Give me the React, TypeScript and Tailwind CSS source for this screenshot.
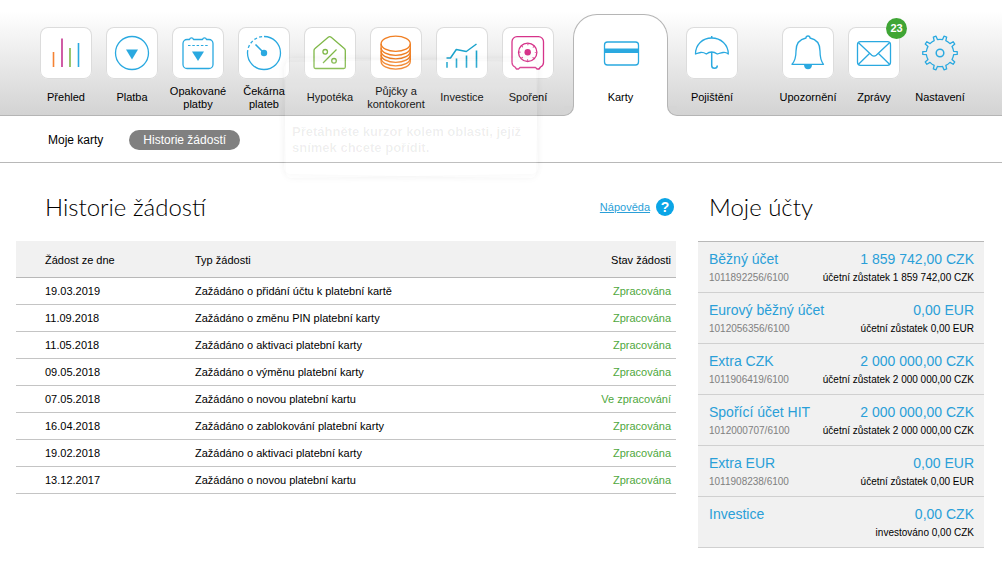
import React from "react";

const BLUE = "#2aa9e0";

type IconProps = { children: React.ReactNode; color?: string };

function Icon({ children, color = BLUE }: IconProps) {
  return (
    <svg viewBox="0 0 52 52" className="block size-[52px]" fill="none" stroke={color} strokeWidth="1.3" strokeLinejoin="round" aria-hidden="true">
      {children}
    </svg>
  );
}

function gearPath(teeth: number, outer: number, inner: number): string {
  const step = (Math.PI * 2) / teeth;
  const parts: string[] = [];
  for (let i = 0; i < teeth; i++) {
    const mid = -Math.PI / 2 + step / 2 + i * step;
    const at = (r: number, a: number) => `${(26 + r * Math.cos(a)).toFixed(2)} ${(26 + r * Math.sin(a)).toFixed(2)}`;
    parts.push(`${i === 0 ? "M" : "L"}${at(inner, mid - step * 0.2)}`);
    parts.push(`L${at(outer, mid - step * 0.13)}`);
    parts.push(`L${at(outer, mid + step * 0.13)}`);
    parts.push(`L${at(inner, mid + step * 0.2)}`);
    parts.push(`A${inner} ${inner} 0 0 1 ${at(inner, mid + step * 0.8)}`);
  }
  return parts.join("") + "Z";
}

const icons = {
  overview: (
    <Icon>
      <path d="M13.5 25V40" stroke="#f58233" strokeWidth="1.6" />
      <path d="M22 11.5V40" stroke="#c4348f" strokeWidth="1.6" />
      <path d="M30 21V40" stroke="#7fb848" strokeWidth="1.6" />
      <path d="M38.5 16V40" strokeWidth="1.6" />
    </Icon>
  ),
  payment: (
    <Icon>
      <circle cx="26" cy="26" r="16.5" />
      <path d="M20 22.5H32L26 32.5Z" fill={BLUE} stroke="none" />
    </Icon>
  ),
  repeated: (
    <Icon>
      <path d="M17.5 12.5H15A4 4 0 0 0 11 16.5V37.5A4 4 0 0 0 15 41.5H37A4 4 0 0 0 41 37.5V16.5A4 4 0 0 0 37 12.5H34.5Q34 10.8 32.5 10.8T30.5 12.5H21.5Q21 10.8 19.5 10.8T17.5 12.5Z" />
      <path d="M16 18.5H37" strokeDasharray="2.5 1.8" strokeWidth="1" />
      <path d="M20 24.5H32L26 34Z" fill={BLUE} stroke="none" />
    </Icon>
  ),
  waiting: (
    <Icon>
      <path d="M26 9.5A16.5 16.5 0 1 1 9.5 26" />
      <path d="M9.5 26A16.5 16.5 0 0 1 26 9.5" strokeDasharray="3 2.2" />
      <path d="M17.5 17.5L26 26" strokeWidth="1.6" />
      <circle cx="26" cy="26" r="3.2" fill={BLUE} stroke="none" />
    </Icon>
  ),
  mortgage: (
    <Icon color="#7fb848">
      <path d="M24.2 10.3Q25.7 9 27.2 10.3L40.3 21.5Q41.3 22.3 41.3 23.5V40Q41.3 41.5 39.8 41.5H11.5Q10 41.5 10 40V23.5Q10 22.3 11 21.5Z" />
      <path d="M19 36L32.5 22.5" />
      <circle cx="21.2" cy="24.8" r="2.3" />
      <circle cx="30" cy="33.8" r="2.3" />
    </Icon>
  ),
  loans: (
    <Icon color="#f07f23">
      <ellipse cx="25.7" cy="16.8" rx="14.6" ry="7.6" />
      <path d="M11.1 16.8V34.5C11.1 38.7 17.6 42.1 25.7 42.1S40.3 38.7 40.3 34.5V16.8" />
      <path d="M11.1 20.8C11.1 25 17.6 28.4 25.7 28.4S40.3 25 40.3 20.8M11.1 24.3C11.1 28.5 17.6 31.9 25.7 31.9S40.3 28.5 40.3 24.3M11.1 27.8C11.1 32 17.6 35.4 25.7 35.4S40.3 32 40.3 27.8M11.1 31.2C11.1 35.4 17.6 38.8 25.7 38.8S40.3 35.4 40.3 31.2" />
    </Icon>
  ),
  invest: (
    <Icon color="#1ba3cc">
      <path d="M10.5 31H14.5L20.3 22.5L30.3 24.5L40.5 17" strokeWidth="1.5" />
      <path d="M11 35V40.7M20.5 31.5V40.7M30.5 28.5V40.7M40.5 23.5V40.7" strokeWidth="1.6" />
    </Icon>
  ),
  savings: (
    <Icon color="#d6338a">
      <path d="M15 9.7H36.5A5 5 0 0 1 41.5 14.7V35.5A5 5 0 0 1 38.5 40L37 42H35L33.5 40.5H18L16.5 42H14.5L13 40A5 5 0 0 1 10 35.5V14.7A5 5 0 0 1 15 9.7Z" />
      <circle cx="25.7" cy="25.3" r="9.2" />
      <circle cx="25.7" cy="25.3" r="3.2" fill="#d6338a" stroke="none" />
      <circle cx="25.7" cy="25.3" r="7.8" strokeWidth="1.5" strokeDasharray="1 5.126" strokeDashoffset="0.5" />
    </Icon>
  ),
  cards: (
    <Icon>
      <rect x="9.5" y="15" width="34" height="23" rx="3" />
      <path d="M9.5 23.7H43.5" strokeWidth="4.6" />
    </Icon>
  ),
  insurance: (
    <Icon>
      <path d="M9.5 27C9.5 17.5 16.5 11 25.7 11S42.3 17.5 42.3 27Q39.8 25 37 25.5T31.3 27Q28.5 25 25.7 25T20.3 27Q17.2 25 14.6 25.5T9.5 27Z" />
      <path d="M25.7 9V11M25.7 25V38.5Q25.7 41.3 28.5 41.3T31.3 38.5" strokeWidth="1.5" />
    </Icon>
  ),
  alerts: (
    <Icon>
      <path d="M24 11Q24 9 26 9T28 11Q38 13 38 24Q38 33 41.5 37.3H10Q14 33 14 24Q14 13 24 11Z" />
      <path d="M22 38H30Q29.5 42.3 26 42.3T22 38Z" fill={BLUE} stroke="none" />
    </Icon>
  ),
  messages: (
    <Icon>
      <rect x="9.5" y="14.7" width="33" height="23.6" rx="3" />
      <path d="M10.5 15.8L23.8 28.3Q26 30 28.2 28.3L41.5 15.8M10.5 37.3L21.5 26.5M41.5 37.3L30.5 26.5" />
    </Icon>
  ),
  settings: (
    <Icon>
      <path d={gearPath(10, 17.3, 13.7)} />
      <circle cx="26" cy="26" r="3.8" strokeWidth="1.5" />
    </Icon>
  ),
};

type NavItemProps = { icon: React.ReactNode; label: string; plain?: boolean; badge?: number };

function NavItem({ icon, label, plain = false, badge }: NavItemProps) {
  return (
    <a href="#" className="flex w-[66px] shrink-0 flex-col items-center pt-[27px]">
      <span className={plain ? "size-[52px]" : "relative size-[52px] rounded-lg bg-white ring-1 ring-[#dcdcdc] ring-inset"}>
        {icon}
        {badge !== undefined && (
          <span className="absolute -top-[9px] -right-[7px] flex size-[21px] items-center justify-center rounded-full bg-[#3fa535] text-[11px] font-bold text-white">
            {badge}
          </span>
        )}
      </span>
      <span className="mt-1 flex h-[29px] items-center text-center leading-[13px]">{label}</span>
    </a>
  );
}

const requests = [
  ["19.03.2019", "Zažádáno o přidání účtu k platební kartě", "Zpracována"],
  ["11.09.2018", "Zažádáno o změnu PIN platební karty", "Zpracována"],
  ["11.05.2018", "Zažádáno o aktivaci platební karty", "Zpracována"],
  ["09.05.2018", "Zažádáno o výměnu platební karty", "Zpracována"],
  ["07.05.2018", "Zažádáno o novou platební kartu", "Ve zpracování"],
  ["16.04.2018", "Zažádáno o zablokování platební karty", "Zpracována"],
  ["19.02.2018", "Zažádáno o aktivaci platební karty", "Zpracována"],
  ["13.12.2017", "Zažádáno o novou platební kartu", "Zpracována"],
];

const accounts = [
  { name: "Běžný účet", number: "1011892256/6100", amount: "1 859 742,00 CZK", note: "účetní zůstatek 1 859 742,00 CZK" },
  { name: "Eurový běžný účet", number: "1012056356/6100", amount: "0,00 EUR", note: "účetní zůstatek 0,00 EUR" },
  { name: "Extra CZK", number: "1011906419/6100", amount: "2 000 000,00 CZK", note: "účetní zůstatek 2 000 000,00 CZK" },
  { name: "Spořící účet HIT", number: "1012000707/6100", amount: "2 000 000,00 CZK", note: "účetní zůstatek 2 000 000,00 CZK" },
  { name: "Extra EUR", number: "1011908238/6100", amount: "0,00 EUR", note: "účetní zůstatek 0,00 EUR" },
  { name: "Investice", number: "", amount: "0,00 CZK", note: "investováno 0,00 CZK" },
];

function MainNav() {
  return (
    <nav aria-label="Hlavní" className="flex h-[116px] border-b border-[#b5b5b5] bg-linear-to-b from-white from-10% to-[#d3d3d3] pr-[29px] pl-[33px]">
      <NavItem icon={icons.overview} label="Přehled" />
      <NavItem icon={icons.payment} label="Platba" />
      <NavItem icon={icons.repeated} label="Opakované platby" />
      <NavItem icon={icons.waiting} label="Čekárna plateb" />
      <NavItem icon={icons.mortgage} label="Hypotéka" />
      <NavItem icon={icons.loans} label="Půjčky a kontokorent" />
      <NavItem icon={icons.invest} label="Investice" />
      <NavItem icon={icons.savings} label="Spoření" />
      <a
        href="#"
        aria-current="page"
        className="relative mt-[14px] mr-[11px] -mb-px ml-3 flex w-[95px] shrink-0 flex-col items-center rounded-t-[24px] border border-b-0 border-[#b5b5b5] bg-white pt-3"
      >
        <span className="absolute bottom-0 -left-[10px] size-[10px] bg-white">
          <span className="block size-full rounded-br-[10px] border-r border-b border-[#b5b5b5] bg-[#d5d5d5]" />
        </span>
        <span className="absolute -right-[10px] bottom-0 size-[10px] bg-white">
          <span className="block size-full rounded-bl-[10px] border-b border-l border-[#b5b5b5] bg-[#d5d5d5]" />
        </span>
        {icons.cards}
        <span className="mt-1 flex h-[29px] items-center leading-[13px]">Karty</span>
      </a>
      <NavItem icon={icons.insurance} label="Pojištění" />
      <div className="ml-auto flex">
        <NavItem icon={icons.alerts} label="Upozornění" />
        <NavItem icon={icons.messages} label="Zprávy" badge={23} />
        <NavItem icon={icons.settings} label="Nastavení" plain />
      </div>
    </nav>
  );
}

function RequestHistory() {
  return (
    <section className="min-w-0 flex-1">
      <div className="flex h-[78px] items-center justify-between pt-[10px] pr-[2px] pl-[29px]">
        <h1 className="font-['Lato'] text-2xl font-light">Historie žádostí</h1>
        <a href="#" className="flex items-center gap-[6px] text-[#2a9fd8]">
          <span className="underline">Nápověda</span>
          <span className="flex size-[18px] items-center justify-center rounded-full bg-[#0ba5e6] text-sm font-bold text-white">?</span>
        </a>
      </div>
      <table className="w-full border-separate border-spacing-0 text-left">
        <thead>
          <tr className="bg-[#f1f1f1]">
            <th className="h-[37px] w-[179px] border-b border-[#b8b8b8] pt-[2px] pl-[29px] font-normal">Žádost ze dne</th>
            <th className="border-b border-[#b8b8b8] pt-[2px] font-normal">Typ žádosti</th>
            <th className="border-b border-[#b8b8b8] pt-[2px] pr-[5px] text-right font-normal">Stav žádosti</th>
          </tr>
        </thead>
        <tbody>
          {requests.map(([date, type, status]) => (
            <tr key={date}>
              <td className="h-[27px] border-b border-[#c4c4c4] pl-[29px]">{date}</td>
              <td className="border-b border-[#c4c4c4]">{type}</td>
              <td className="border-b border-[#c4c4c4] pr-[5px] text-right text-[#4fa83d]">{status}</td>
            </tr>
          ))}
        </tbody>
      </table>
    </section>
  );
}

function Accounts() {
  return (
    <aside className="w-[286px] shrink-0">
      <div className="flex h-[78px] items-center pt-[10px] pl-[11px]">
        <h2 className="font-['Lato'] text-2xl font-light">Moje účty</h2>
      </div>
      <ul className="border-t border-[#b8b8b8] bg-[#f1f1f1]">
        {accounts.map((a) => (
          <li key={a.name} className="border-b border-[#d0d0d0] pt-2 pr-[10px] pb-1 pl-[11px]">
            <a href="#" className="flex justify-between text-sm leading-[18px] text-[#2a9fd8]">
              <span>{a.name}</span>
              <span>{a.amount}</span>
            </a>
            <div className="flex justify-between text-[10px] leading-[20px]">
              <span className="text-[#808080]">{a.number}</span>
              <span>{a.note}</span>
            </div>
          </li>
        ))}
      </ul>
    </aside>
  );
}

function SnipHint() {
  return (
    <div className="pointer-events-none absolute top-[60px] left-[285px] w-[252px]">
      <div className="absolute inset-0 rotate-1 rounded-md bg-white/5 shadow-[0_0_8px_rgba(0,0,0,0.04)]" />
      <div className="absolute inset-0 -rotate-1 rounded-md bg-white/5 shadow-[0_0_8px_rgba(0,0,0,0.04)]" />
      <p className="relative px-[7px] pt-[64px] pb-[20px] text-[13px] leading-[16px] font-bold text-black/7">
        Přetáhněte kurzor kolem oblasti, jejíž snímek chcete pořídit.
      </p>
    </div>
  );
}

export default function App() {
  return (
    <div className="relative min-h-screen bg-white font-['Liberation_Sans',sans-serif] text-[11px] text-black">
      <MainNav />
      <nav aria-label="Karty" className="flex h-[47px] items-center gap-[26px] border-b border-[#b8b8b8] pt-[2px] pl-[48px] text-xs">
        <a href="#">Moje karty</a>
        <a href="#" aria-current="page" className="rounded-full bg-[#808080] px-[14px] leading-[20px] text-white">
          Historie žádostí
        </a>
      </nav>
      <main className="flex gap-[22px] pr-[18px] pl-4">
        <RequestHistory />
        <Accounts />
      </main>
      <SnipHint />
    </div>
  );
}
